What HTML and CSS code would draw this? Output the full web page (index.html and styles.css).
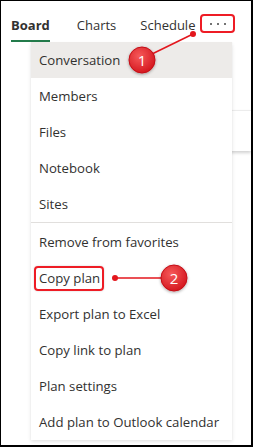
FILE: index.html
```html
<!DOCTYPE html>
<html lang="en">
<head>
  <meta charset="UTF-8" />
  <title>Planner - Board menu</title>
  <link rel="stylesheet" href="styles.css">
</head>
<body>
  <div class="frame">
    <nav class="tabs">
      <span class="tab ativo">Board</span>
      <span class="tab">Charts</span>
      <span class="tab">Schedule</span>
      <span class="mais"><i></i><i></i><i></i></span>
    </nav>

    <div class="quadro">
      <div class="cartao"></div>
    </div>

    <ul class="menu">
      <li class="item foco">Conversation</li>
      <li class="item">Members</li>
      <li class="item">Files</li>
      <li class="item">Notebook</li>
      <li class="item">Sites</li>
      <li class="divisor"></li>
      <li class="item">Remove from favorites</li>
      <li class="item"><span class="marcado">Copy plan</span></li>
      <li class="item">Export plan to Excel</li>
      <li class="item">Copy link to plan</li>
      <li class="item">Plan settings</li>
      <li class="item">Add plan to Outlook calendar</li>
    </ul>

    <svg class="chamadas" width="253" height="447" viewBox="0 0 253 447">
      <defs>
        <radialGradient id="bola" cx="40%" cy="35%" r="70%">
          <stop offset="0" stop-color="#f65a5a" />
          <stop offset="1" stop-color="#d3141c" />
        </radialGradient>
        <filter id="sombra" x="-50%" y="-50%" width="200%" height="200%">
          <feDropShadow dx="0" dy="1" stdDeviation="1.5" flood-color="#000" flood-opacity="0.35" />
        </filter>
      </defs>
      <g transform="translate(-1 -1)">
        <!-- chamada 1 -->
        <line x1="193" y1="34" x2="152" y2="54" stroke="#e3161d" stroke-width="1.5" />
        <circle cx="193" cy="34" r="3" fill="#e3161d" />
        <circle cx="142" cy="60" r="13" fill="url(#bola)" stroke="#c40f16" stroke-width="1" filter="url(#sombra)" />
        <text x="142" y="65.5" class="num">1</text>
        <!-- chamada 2 -->
        <line x1="115" y1="278" x2="161" y2="278" stroke="#e3161d" stroke-width="1.5" />
        <circle cx="115" cy="278" r="3" fill="#e3161d" />
        <circle cx="174" cy="278" r="13" fill="url(#bola)" stroke="#c40f16" stroke-width="1" filter="url(#sombra)" />
        <text x="174" y="283.5" class="num">2</text>
      </g>
    </svg>
  </div>
</body>
</html>
```
FILE: styles.css
```css
body {
  margin: 0;
  font-family: 'Open Sans', 'Noto Sans', sans-serif;
  color: #323130;
  background: #fff;
}

.frame {
  position: relative;
  box-sizing: border-box;
  width: 253px;
  height: 447px;
  border: 1px solid #000;
  border-right-width: 2px;
  border-bottom-width: 2px;
  overflow: hidden;
  background: white;
}

.tabs {
  display: flex;
  align-items: flex-start;
  padding: 0 0 0 10px;
  height: 41px;
}

.tab {
  margin-top: 14px;
  margin-right: 24px;
  padding-bottom: 5px;
  font-size: 13px;
  line-height: 20px;
  border-bottom: 2px solid transparent;
}

.tab.ativo {
  margin-right: 27px;
  font-weight: bold;
  border-bottom-color: #237b4b;
}

.tab:nth-child(3) {
  margin-right: 5px;
}

.mais {
  margin-top: 13px;
  box-sizing: border-box;
  width: 35px;
  height: 19px;
  border: 2px solid #ee1c25;
  border-radius: 4px;
  display: flex;
  justify-content: center;
  align-items: center;
  gap: 5px;
}

.mais i {
  width: 2px;
  height: 2px;
  border-radius: 50%;
  background: #444;
}

.quadro {
  padding: 68px 0 0 170px;
}

.cartao {
  height: 40px;
  background: white;
  border-top: 1px solid #ececec;
  box-shadow: 0 2px 3px rgba(0,0,0,0.18);
}

.menu {
  position: absolute;
  top: 41px;
  left: 30px;
  width: 201px;
  margin: 0;
  padding: 0;
  list-style: none;
  background: white;
  box-shadow: 0 1.6px 3.6px rgba(0,0,0,0.13), 0 0.3px 0.9px rgba(0,0,0,0.11);
}

.item {
  height: 36px;
  padding-left: 8px;
  display: flex;
  align-items: center;
  font-size: 13.2px;
  white-space: nowrap;
}

.item.foco {
  background: #edebe9;
}

.divisor {
  height: 1px;
  margin-bottom: 1px;
  background: #e1dfdd;
}

.marcado {
  margin-left: -5px;
  padding: 0 2px 0 3px;
  line-height: 21px;
  border: 2px solid #ee1c25;
  border-radius: 4px;
  box-shadow: 0 0 2px rgba(0,0,0,0.2);
}

.chamadas {
  position: absolute;
  top: 0;
  left: 0;
  pointer-events: none;
}

.num {
  fill: white;
  font-family: 'Open Sans', sans-serif;
  font-size: 15px;
  text-anchor: middle;
}
```
